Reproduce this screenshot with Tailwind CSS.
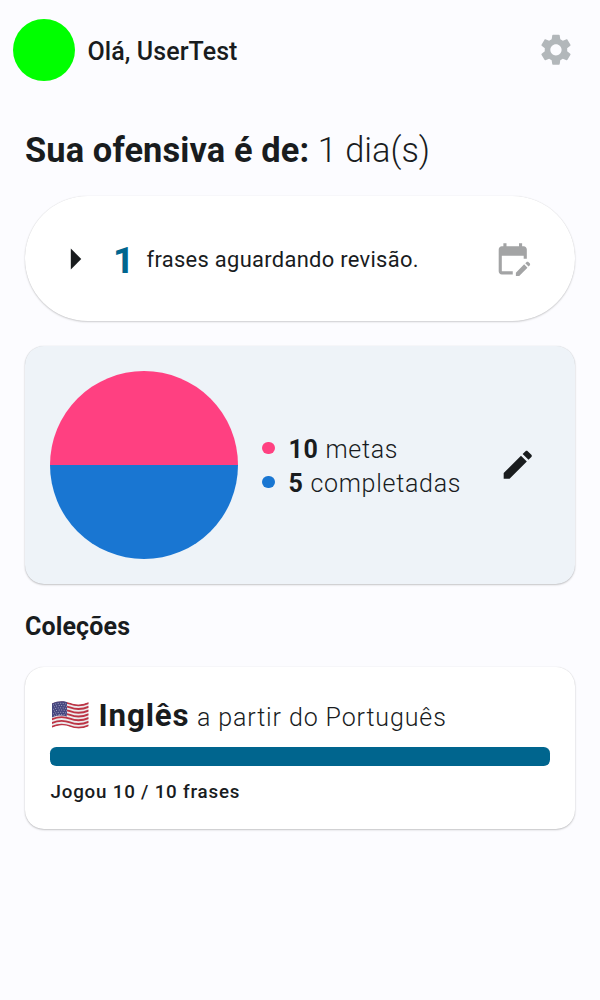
<!DOCTYPE html>
<html lang="pt-BR">
<head>
<meta charset="utf-8">
<title>Frases</title>
<script src="https://cdn.jsdelivr.net/npm/@tailwindcss/browser@4"></script>
</head>
<body class="min-h-screen bg-[#fcfcff] font-['Roboto',sans-serif] text-[#191c1e]">
<header class="flex h-[100px] items-center pl-[12.5px] pr-[25px]">
  <div class="size-[62.5px] rounded-full bg-[#00ff00]"></div>
  <h1 class="ml-[12.5px] grow pt-[2px] whitespace-nowrap text-[25px] leading-[37px] font-medium tracking-[0.08px]">Olá, UserTest</h1>
  <svg class="size-[37.5px] fill-[#b2b7ba]" viewBox="0.5 0 24 24"><path d="M19.14 12.94c.04-.3.06-.61.06-.94 0-.32-.02-.64-.07-.94l2.03-1.58c.18-.14.23-.41.12-.61l-1.92-3.32c-.12-.22-.37-.29-.59-.22l-2.39.96c-.5-.38-1.03-.7-1.62-.94l-.36-2.54c-.04-.24-.24-.41-.48-.41h-3.84c-.24 0-.43.17-.47.41l-.36 2.54c-.59.24-1.13.57-1.62.94l-2.39-.96c-.22-.08-.47 0-.59.22L2.74 8.87c-.12.21-.08.47.12.61l2.03 1.58c-.05.3-.09.63-.09.94s.02.64.07.94l-2.03 1.58c-.18.14-.23.41-.12.61l1.92 3.32c.12.22.37.29.59.22l2.39-.96c.5.38 1.03.7 1.62.94l.36 2.54c.05.24.24.41.48.41h3.84c.24 0 .44-.17.47-.41l.36-2.54c.59-.24 1.13-.56 1.62-.94l2.39.96c.22.08.47 0 .59-.22l1.92-3.32c.12-.22.07-.47-.12-.61l-2.01-1.58zM12 15.6c-1.98 0-3.6-1.62-3.6-3.6s1.62-3.6 3.6-3.6 3.6 1.62 3.6 3.6-1.62 3.6-3.6 3.6z"/></svg>
</header>
<main class="flex flex-col px-[25px]">
  <h2 class="mt-[28px] h-[44px] whitespace-nowrap text-[34.4px] leading-[44px] font-light"><b class="font-bold tracking-[0.12px]">Sua ofensiva é de:</b> 1 dia(s)</h2>
  <section class="mt-[24px] flex h-[125px] items-center rounded-full bg-white px-[25px] shadow-[0_1px_2px_rgba(0,0,0,0.18),0_0_1px_rgba(0,0,0,0.15)]">
    <svg class="size-[50px] fill-[#191c1e]" viewBox="0 0 24 24"><path d="M10 17l5-5-5-5z"/></svg>
    <span class="ml-[13px] pt-[3px] text-[37.5px] font-bold text-[#00658e]">1</span>
    <span class="ml-[12px] grow pt-[3px] whitespace-nowrap text-[21.9px] tracking-[0.31px]">frases aguardando revisão.</span>
    <svg class="mr-[18.75px] size-[37.5px] fill-[#a3a4a5]" viewBox="0 0 24 24"><path d="M12 22H5c-1.11 0-2-.9-2-2L3.01 6c0-1.1.88-2 1.99-2h1V2h2v2h8V2h2v2h1c1.1 0 2 .9 2 2v6h-2v-2H5v10h7v2zm10.13-5.01.71-.71c.39-.39.39-1.02 0-1.41l-.71-.71c-.39-.39-1.02-.39-1.41 0l-.71.71 2.12 2.12zm-.71.71-5.3 5.3H14v-2.12l5.3-5.3 2.12 2.12z"/></svg>
  </section>
  <section class="mt-[25px] flex h-[237.5px] items-center rounded-[19px] bg-[#eef3f8] px-[25px] shadow-[0_1px_2px_rgba(0,0,0,0.22),0_0_1px_rgba(0,0,0,0.15)]">
    <div class="flex size-[187.5px] flex-col overflow-hidden rounded-full">
      <div class="flex-1 bg-[#ff4081]"></div>
      <div class="flex-1 bg-[#1976d2]"></div>
    </div>
    <ul class="ml-[24.5px] grow text-[25px] leading-[34px] font-light tracking-[0.72px]">
      <li class="flex h-[34px] items-center"><i class="mr-[14px] size-[12.5px] rounded-full bg-[#ff4081]"></i><span class="pt-[5px] whitespace-nowrap"><b class="font-bold">10</b> metas</span></li>
      <li class="flex h-[34px] items-center"><i class="mr-[14px] size-[12.5px] rounded-full bg-[#1976d2]"></i><span class="pt-[4px] whitespace-nowrap"><b class="font-bold">5</b> completadas</span></li>
    </ul>
    <svg class="mr-[13.75px] size-[37.5px] fill-[#191c1e]" viewBox="0 0 24 24"><path d="M3 17.25V21h3.75L17.81 9.94l-3.75-3.75L3 17.25zM20.71 7.04c.39-.39.39-1.02 0-1.41l-2.34-2.34c-.39-.39-1.02-.39-1.41 0l-1.83 1.83 3.75 3.75 1.83-1.83z"/></svg>
  </section>
  <h2 class="mt-[24px] h-[37px] text-[25px] leading-[37px] font-bold tracking-[0.13px]">Coleções</h2>
  <section class="mt-[22.5px] h-[161.5px] rounded-[19px] bg-white px-[25px] pt-[25px] shadow-[0_1px_2px_rgba(0,0,0,0.22),0_0_1px_rgba(0,0,0,0.15)]">
    <div class="flex h-[47px] items-baseline whitespace-nowrap text-[25px] leading-[47px] font-light tracking-[0.88px]">
      <svg class="mr-[9.5px] ml-px h-[28px] w-[38px] -mt-px self-center" viewBox="0 0 38 28">
        <defs><clipPath id="flag"><path d="M1 2.5C7-.5 13-.5 19 1.8S31 4 37.5 1V25.2C31 28.2 25 28 19 25.7S7 24 1 26.8Z"/></clipPath></defs>
        <g clip-path="url(#flag)">
          <path d="M0 0h38v28H0z" fill="#eceaec"/>
          <g fill="none" stroke="#bc3445" stroke-width="1.9">
            <path d="M0 3.6C7 .4 13 .4 19 2.7S31 5 38 1.9"/>
            <path d="M0 7.35C7 4.15 13 4.15 19 6.45S31 8.75 38 5.65"/>
            <path d="M0 11.1C7 7.9 13 7.9 19 10.2S31 12.5 38 9.4"/>
            <path d="M0 14.85C7 11.65 13 11.65 19 13.95S31 16.25 38 13.15"/>
            <path d="M0 18.6C7 15.4 13 15.4 19 17.7S31 20 38 16.9"/>
            <path d="M0 22.35C7 19.15 13 19.15 19 21.45S31 23.75 38 20.65"/>
            <path d="M0 26.1C7 22.9 13 22.9 19 25.2S31 27.5 38 24.4"/>
          </g>
          <path d="M0 2C6-1 11-1 16 .6V15.5C11 13.8 6 14 0 16.9Z" fill="#46467f"/>
          <g fill="none" stroke="#b6b4cc" stroke-width=".9" stroke-dasharray=".9 1.6">
            <path d="M2 4C6 2 11 1.8 16 3.2"/><path d="M3 6C6 4.2 11 4 16 5.4"/><path d="M2 8.5C6 6.5 11 6.3 16 7.7"/><path d="M3 10.5C6 8.7 11 8.5 16 9.9"/><path d="M2 13C6 11 11 10.8 16 12.2"/><path d="M3 15C6 13.2 11 12.9 16 14.3"/>
          </g>
        </g>
      </svg>
      <b class="text-[31.25px] font-bold">Inglês</b><span class="ml-[7.5px]">a partir do Português</span>
    </div>
    <div class="mt-[7.5px] h-[19px] rounded-[6.25px] bg-[#00658e]"></div>
    <p class="mt-[13.5px] ml-[0.5px] text-[18.75px] leading-[27px] font-medium tracking-[0.8px]">Jogou 10 / 10 frases</p>
  </section>
</main>
</body>
</html>
